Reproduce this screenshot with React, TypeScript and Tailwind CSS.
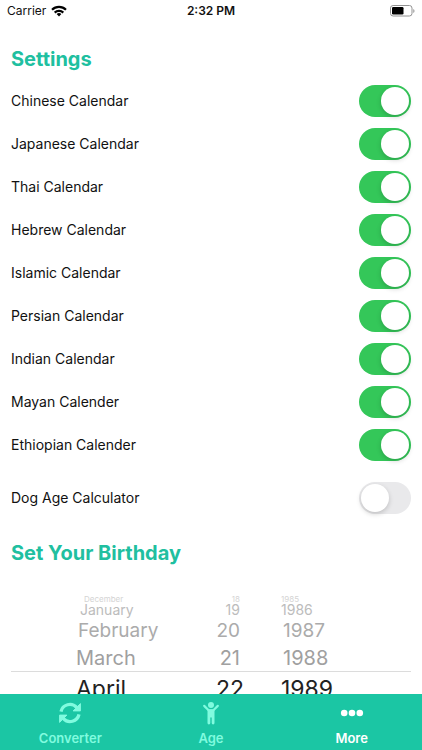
import { useState } from "react";

const calendars = [
  "Chinese Calendar",
  "Japanese Calendar",
  "Thai Calendar",
  "Hebrew Calendar",
  "Islamic Calendar",
  "Persian Calendar",
  "Indian Calendar",
  "Mayan Calender",
  "Ethiopian Calender",
];

// Wheel rows, from the rim down to the selected row.
const rowStyles = [
  "h-2 text-[8px] text-[#d4d4d4]",
  "h-[14px] text-[14px] text-[#bcbcbc]",
  "h-[26px] text-[19px] text-[#ababab]",
  "h-[30px] text-[20px] text-[#a0a0a0]",
  "h-8 text-[23px] text-[#222222]",
];

const monthInsets = ["pl-2", "pl-1", "pl-0.5", "pl-0", "pl-0"];
const dayInsets = ["pr-1", "pr-1", "pr-1", "pr-1", "pr-0"];
const yearInsets = ["pl-0", "pl-0", "pl-0.5", "pl-0.5", "pl-0"];

function Toggle({ label, initial }: { label: string; initial: boolean }) {
  const [on, setOn] = useState(initial);
  return (
    <label className="flex h-[43px] items-center justify-between text-[14px] text-[#111111]">
      <span>{label}</span>
      <span
        className={`relative flex h-8 w-[52px] items-center rounded-full p-0.5 ${
          on ? "justify-end bg-[#34c759]" : "justify-start bg-[#e9e9eb]"
        }`}
      >
        <input
          type="checkbox"
          role="switch"
          checked={on}
          onChange={() => setOn(!on)}
          className="absolute inset-0 m-0 cursor-pointer appearance-none rounded-full"
        />
        <span className="pointer-events-none z-10 size-7 rounded-full bg-white shadow-[0_2px_5px_rgba(0,0,0,0.18)]" />
      </span>
    </label>
  );
}

function Wheel({
  label,
  items,
  insets,
  align,
}: {
  label: string;
  items: string[];
  insets: string[];
  align: string;
}) {
  return (
    <div role="listbox" aria-label={label} className="flex flex-col">
      {items.map((item, i) => (
        <button
          key={item}
          type="button"
          role="option"
          aria-selected={i === 4}
          className={`flex items-center leading-none whitespace-nowrap ${align} ${rowStyles[i]} ${insets[i]}`}
        >
          <span className="leading-none">{item}</span>
        </button>
      ))}
    </div>
  );
}

function StatusBar() {
  return (
    <header className="grid h-[22px] shrink-0 grid-cols-3 items-center px-[7px] text-[12px] text-[#111111]">
      <div className="flex items-center gap-[5px]">
        <span>Carrier</span>
        <svg viewBox="0 0 16 12" className="h-3 w-4" fill="none" stroke="black" strokeWidth="2.2" aria-label="Wi-Fi">
          <path d="M1 4.7a10 10 0 0 1 14 0" />
          <path d="M3.7 7.6a6.1 6.1 0 0 1 8.6 0" />
          <path d="M8 11.5 5.6 9.1a3.4 3.4 0 0 1 4.8 0Z" fill="black" stroke="none" />
        </svg>
      </div>
      <div className="text-center font-semibold">2:32 PM</div>
      <svg viewBox="0 0 25 12" className="h-3 w-[25px] justify-self-end" aria-label="Battery">
        <rect x="0.5" y="0.5" width="21.5" height="10.5" rx="2.6" fill="none" stroke="#929292" />
        <rect x="2" y="2" width="11.5" height="7.5" rx="1.2" fill="black" />
        <path d="M23.3 4v4c1.6-.5 1.6-3.5 0-4Z" fill="#929292" />
      </svg>
    </header>
  );
}

function ConverterIcon() {
  return (
    <svg viewBox="0 0 24 24" className="size-6" fill="none" stroke="currentColor" strokeWidth="3.3">
      <path d="M3 10.6A9.1 9.1 0 0 1 18.6 6.4" />
      <path d="M21 13.4A9.1 9.1 0 0 1 5.4 17.6" />
      <path
        d="M22.4 2.6v7.3h-7.3ZM1.6 21.4v-7.3h7.3Z"
        fill="currentColor"
        strokeWidth="1"
        strokeLinejoin="round"
      />
    </svg>
  );
}

function AgeIcon() {
  return (
    <svg viewBox="0 0 24 24" className="size-6" fill="currentColor">
      <circle cx="12" cy="4" r="3" />
      <path
        d="m5.2 4.9 4.4 4.4h4.8l4.4-4.4"
        fill="none"
        stroke="currentColor"
        strokeWidth="2.2"
        strokeLinecap="round"
        strokeLinejoin="round"
      />
      <path d="M8.500 8.400h7v13.700a1.300 1.300 0 0 1-2.800 0v-5.600h-1.400v5.600a1.300 1.300 0 0 1-2.800 0Z" />
    </svg>
  );
}

function MoreIcon() {
  return (
    <svg viewBox="0 0 24 24" className="size-6" fill="currentColor">
      <circle cx="4.2" cy="12" r="3.3" />
      <circle cx="12" cy="12" r="3.3" />
      <circle cx="19.8" cy="12" r="3.3" />
    </svg>
  );
}

const tabs = [
  { label: "Converter", Icon: ConverterIcon },
  { label: "Age", Icon: AgeIcon },
  { label: "More", Icon: MoreIcon },
];

export default function App() {
  const [active, setActive] = useState("More");
  return (
    <div className="flex h-screen flex-col overflow-hidden bg-white font-['Inter','Liberation_Sans',sans-serif]">
      <StatusBar />
      <main className="min-h-0 flex-1 overflow-hidden px-[11px] pt-[25px]">
        <h1 className="text-[20px] leading-6 font-bold text-[#20bfa0]">Settings</h1>
        <section className="pt-2">
          {calendars.map((name) => (
            <Toggle key={name} label={name} initial />
          ))}
        </section>
        <section className="pt-2.5">
          <Toggle label="Dog Age Calculator" initial={false} />
        </section>
        <h2 className="pt-[22px] text-[20px] leading-6 font-bold text-[#20bfa0]">Set Your Birthday</h2>
        <div className="mt-[30px] grid">
          <div className="col-start-1 row-start-1 mt-[76px] border-t border-[#dcdcdc]" />
          <div className="col-start-1 row-start-1 grid grid-cols-[233fr_167fr]">
            <div className="flex justify-between pl-[65px]">
              <Wheel
                label="Month"
                items={["December", "January", "February", "March", "April"]}
                insets={monthInsets}
                align="justify-start"
              />
              <Wheel label="Day" items={["18", "19", "20", "21", "22"]} insets={dayInsets} align="justify-end" />
            </div>
            <div className="flex pl-[37px]">
              <Wheel
                label="Year"
                items={["1985", "1986", "1987", "1988", "1989"]}
                insets={yearInsets}
                align="justify-start"
              />
            </div>
          </div>
        </div>
      </main>
      <nav className="grid h-14 shrink-0 grid-cols-3 bg-[#1bc6a4]">
        {tabs.map(({ label, Icon }) => (
          <button
            key={label}
            type="button"
            aria-current={active === label ? "page" : undefined}
            onClick={() => setActive(label)}
            className={`flex flex-col items-center gap-1 pt-[7px] text-[13px] leading-[18px] font-semibold ${
              active === label ? "text-white" : "text-[#80fbdf]"
            }`}
          >
            <Icon />
            <span>{label}</span>
          </button>
        ))}
      </nav>
    </div>
  );
}
